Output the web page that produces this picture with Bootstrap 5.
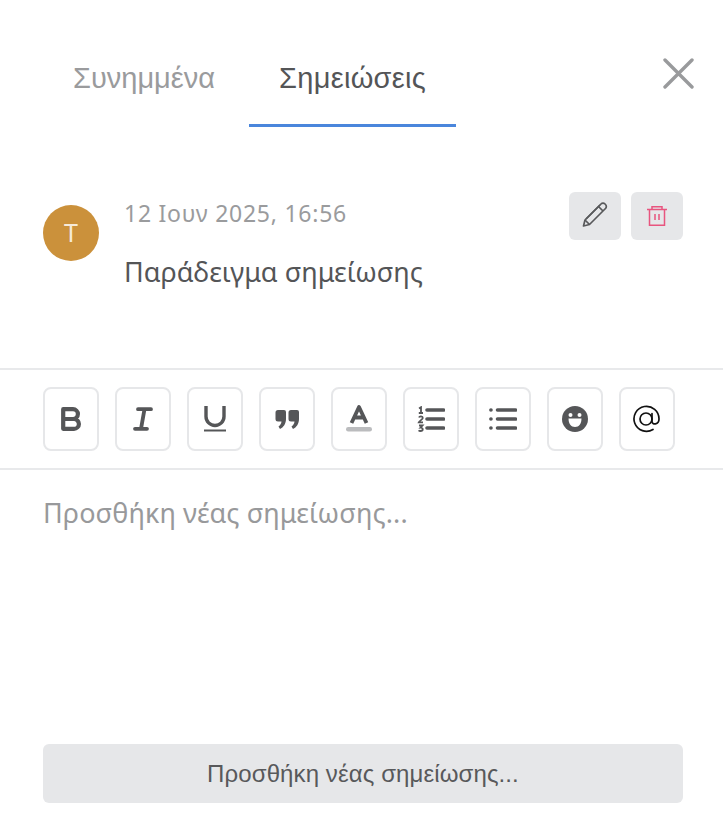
<!DOCTYPE html>
<html lang="el"><head><meta charset="utf-8"><title>Σημειώσεις</title>
<link href="https://cdn.jsdelivr.net/npm/bootstrap@5.3.0/dist/css/bootstrap.min.css" rel="stylesheet">
<style>
html,body{height:813px;overflow:hidden;background:#fff}
body{font-family:"Noto Sans","Liberation Sans",sans-serif;color:#4f5052}
.tabs-head{height:127px;padding:0 43px;column-gap:4px}
.tab-item{display:block;font-family:"Liberation Sans",sans-serif;font-size:29px;line-height:34px;padding:61px 30px 29px;color:#9a9b9d;border-bottom:3px solid transparent;text-decoration:none}
.tab-item.on{color:#545557;border-bottom-color:#4a86dc;letter-spacing:.3px}
.tab-close{background:none;border:0;padding:0;width:32px;height:32px;margin:57px -14px 0 0;color:#999a9c}
.note-row{height:241px;padding:65px 40px 0 43px}
.note-ava{width:56px;height:56px;margin-top:13px;background:#cb913b;color:#f6ead8;font-size:25px;flex:none}
.note-body{margin-left:25px}
.note-date{font-size:23px;line-height:28px;letter-spacing:.75px;color:#9a9b9d;margin-top:7px}
.note-txt{font-size:27px;line-height:32px;margin-top:29px;color:#545557}
.act-btn{width:52px;height:48px;background:#e6e7e9;border:0;border-radius:6px;padding:0}
.act-gap{column-gap:10px}
.tool-bar{height:102px;border-top:2px solid #e8e9eb;border-bottom:2px solid #e8e9eb;padding:17px 43px 0;gap:16px}
.tool-btn{width:56px;height:64px;background:#fff;border:2px solid #e6e7e9;border-radius:8px;padding:0;display:flex;align-items:center;justify-content:center}
.note-ph{font-size:27px;line-height:32px;letter-spacing:.1px;padding:27px 43px 0;height:274px;color:#98999b}
.add-btn{display:block;width:640px;height:59px;margin-left:43px;background:#e6e7e9;border:0;border-radius:6px;font-family:"Liberation Sans",sans-serif;font-size:24px;letter-spacing:.1px;color:#58595b;padding:0}
</style></head><body>
<div class="tabs-head d-flex">
  <a class="tab-item" href="#">Συνημμένα</a>
  <a class="tab-item on" href="#">Σημειώσεις</a>
  <button class="tab-close ms-auto" aria-label="Κλείσιμο"><svg width="32" height="32" viewBox="0 0 32 32"><path d="M3 3 30 30M30 3 3 30" stroke="currentColor" stroke-width="3.400" stroke-linecap="round" fill="none"/></svg></button>
</div>
<div class="note-row d-flex align-items-start">
  <div class="note-ava rounded-circle d-flex align-items-center justify-content-center">T</div>
  <div class="note-body">
    <div class="note-date">12 Ιουν 2025, 16:56</div>
    <div class="note-txt">Παράδειγμα σημείωσης</div>
  </div>
  <div class="ms-auto d-flex act-gap">
    <button class="act-btn pb-1" aria-label="Επεξεργασία"><svg width="26" height="26" viewBox="0 0 26 26" fill="none" stroke="#58595b" stroke-width="1.700" stroke-linejoin="round"><path d="M1.500 25 3 19 19 3a2.800 2.800 0 0 1 4 0l.5.5a2.800 2.800 0 0 1 0 4L7.500 23.500Z"/><path d="M3 19 7.500 23.500M16.500 5.500l4.500 4.500M4 18 18 4"/></svg></button>
    <button class="act-btn pb-1" aria-label="Διαγραφή"><svg width="22" height="20" viewBox="0 0 22 20" fill="none" stroke="#e8557f" stroke-width="1.500"><path d="M1 3.500H21M6 3.500V.8H16V3.500M3.500 3.500V19.200H18.500V3.500M9 8V14M13 8V14"/></svg></button>
  </div>
</div>
<div class="tool-bar d-flex">
  <button class="tool-btn" aria-label="B"><svg width="20" height="24" viewBox="0 0 20 24" fill="none" stroke="#555658" stroke-width="4.200" stroke-linejoin="round"><path d="M2.200 2.200H12a4.800 4.800 0 0 1 0 9.800H2.200ZM2.200 12H13a4.900 4.900 0 0 1 0 9.800H2.200Z"/></svg></button>
  <button class="tool-btn" aria-label="I"><svg width="20" height="24" viewBox="0 0 20 24" fill="none" stroke="#555658" stroke-width="3.800" stroke-linecap="round"><path d="M5 2.200H18M2 21.800H14M11.500 2.200 8 21.800"/></svg></button>
  <button class="tool-btn" aria-label="U"><svg width="24" height="26" viewBox="0 0 24 26" fill="none" stroke="#555658"><path d="M3 0V10.500a9 9 0 0 0 18 0V0" stroke-width="3.400"/><path d="M1 24.500H23" stroke-width="2"/></svg></button>
  <button class="tool-btn" aria-label="Quote"><svg width="24" height="19" viewBox="0 0 24 19" fill="#555658"><path d="M3 0h6a2 2 0 0 1 2 2v7c0 4.500-2.500 8.500-6 10l-1.500-2.500c1.800-1.300 2.800-3 3-5H3a2.500 2.500 0 0 1-2.500-2.500V2.500A2.500 2.500 0 0 1 3 0ZM16 0h6a2 2 0 0 1 2 2v7c0 4.500-2.500 8.500-6 10l-1.500-2.500c1.800-1.300 2.800-3 3-5H16a2.500 2.500 0 0 1-2.500-2.500V2.500A2.500 2.500 0 0 1 16 0Z"/></svg></button>
  <button class="tool-btn" aria-label="Color"><svg width="28" height="28" viewBox="0 0 28 28"><path d="M6.500 18 14 2 21.500 18M9.500 12.500H18.500" fill="none" stroke="#555658" stroke-width="3.800" stroke-linejoin="round"/><rect x="1" y="22" width="26" height="4.500" rx="2.200" fill="#bbbcbe"/></svg></button>
  <button class="tool-btn" aria-label="OL"><svg width="28" height="26" viewBox="0 0 28 26" fill="none" stroke="#555658"><path d="M10 4H26.500M10 13H26.500M10 22H26.500" stroke-width="3.600" stroke-linecap="round"/><path d="M2 2.500 4 1.200V7M1.800 7H6M2 11.500C2.500 10 5.800 10 5.800 12C5.800 13.500 2.500 14.500 1.800 16.300H6M2 19.500H5.500L3.500 21.700C6.500 21.500 6.500 25 3.500 25C2.500 25 2 24.700 1.700 24.200" stroke-width="1.800"/></svg></button>
  <button class="tool-btn" aria-label="UL"><svg width="28" height="22" viewBox="0 0 28 22" fill="none" stroke="#555658" stroke-width="3.600" stroke-linecap="round"><path d="M8.500 2H26.500M8.500 11H26.500M8.500 20H26.500"/><path d="M1.900 2H2M1.900 11H2M1.900 20H2"/></svg></button>
  <button class="tool-btn" aria-label="Emoji"><svg width="26" height="26" viewBox="0 0 26 26"><circle cx="13" cy="13" r="13" fill="#555658"/><circle cx="8.500" cy="9" r="2" fill="#fff"/><circle cx="17.500" cy="9" r="2" fill="#fff"/><path d="M6.500 12.500H19.500C19.500 17.500 17 21 13 21S6.500 17.500 6.500 12.500Z" fill="#fff"/></svg></button>
  <button class="tool-btn" aria-label="Mention"><svg width="28" height="28" viewBox="0 0 28 28" fill="none" stroke="#111" stroke-width="1.700" stroke-linecap="round"><circle cx="13" cy="14" r="6"/><path d="M19 8.500V16.500C19 20 26 20 26 14A12.500 12.500 0 1 0 20 24.500"/></svg></button>
</div>
<div class="note-ph">Προσθήκη νέας σημείωσης...</div>
<button class="add-btn">Προσθήκη νέας σημείωσης...</button>
</body></html>
